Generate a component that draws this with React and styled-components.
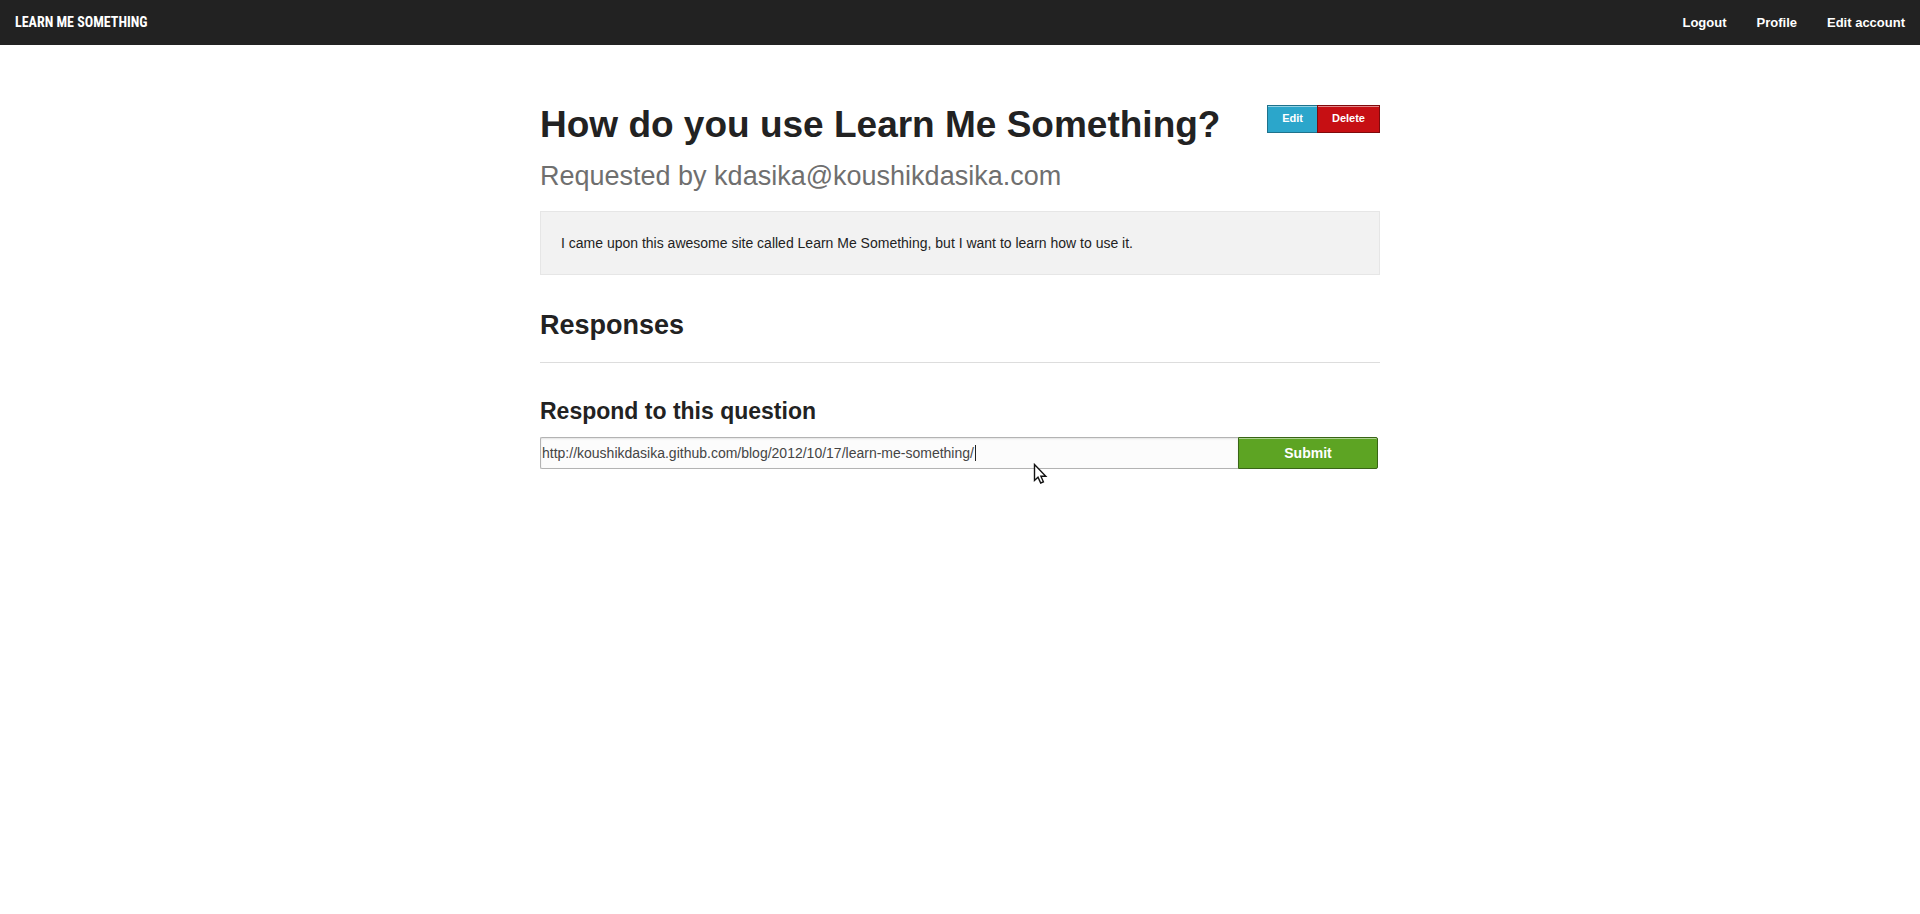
import React, { useEffect, useRef, useState } from "react";
import styled, { createGlobalStyle } from "styled-components";

const GlobalStyle = createGlobalStyle`
  *, *::before, *::after { box-sizing: border-box; }
  body {
    margin: 0;
    background: #fff;
    color: #222;
    font: 14px/22px "Liberation Sans", Arial, sans-serif;
  }
`;

const Site = styled.div`
  min-height: 100vh;
`;

const TopBar = styled.header`
  display: flex;
  justify-content: space-between;
  align-items: center;
  height: 45px;
  padding: 0 15px;
  background: #222;
`;

const Brand = styled.a`
  color: #fff;
  font: bold 14px/45px "Roboto Condensed", "Open Sans Condensed", "Noto Sans CJK JP", sans-serif;
  text-transform: uppercase;
  text-decoration: none;
  white-space: nowrap;
`;

const Nav = styled.nav`
  display: flex;
  gap: 30px;
`;

const NavLink = styled.a`
  color: #fff;
  font-size: 13px;
  font-weight: bold;
  line-height: 45px;
  text-decoration: none;
`;

const Page = styled.main`
  max-width: 840px;
  margin: 0 auto;
  padding-top: 59px;
`;

const TitleRow = styled.div`
  display: flex;
  justify-content: space-between;
  align-items: flex-start;
`;

const Title = styled.h1`
  margin: 0 0 15px;
  font-size: 37px;
  line-height: 42px;
`;

const Subtitle = styled.p`
  margin: 0 0 20px;
  color: #6f6f6f;
  font-size: 27px;
  line-height: 30px;
`;

const ButtonGroup = styled.div`
  display: flex;
  padding-top: 1px;
`;

const tones = {
  info: { face: "#2ba6cb", edge: "#1e728c" },
  alert: { face: "#c60f13", edge: "#7f0a0c" },
  success: { face: "#5da423", edge: "#396516" },
};

const Button = styled.button`
  border: 1px solid ${(p) => tones[p.$tone].edge};
  background: ${(p) => tones[p.$tone].face};
  box-shadow: inset 0 1px 0 rgba(255, 255, 255, 0.5);
  color: #fff;
  font-family: inherit;
  font-weight: bold;
  cursor: pointer;
`;

const SmallButton = styled(Button)`
  height: 28px;
  padding: 0 14px 2px;
  font-size: 11px;
  line-height: 12px;

  & + & {
    margin-left: -1px;
  }
`;

const Panel = styled.section`
  padding: 20px;
  border: 1px solid #e6e6e6;
  background: #f2f2f2;

  p { margin: 0; }
`;

const Responses = styled.section`
  padding: 35px 0 22px;
  border-bottom: 1px solid #ddd;
`;

const SectionTitle = styled.h2`
  margin: 0;
  font-size: 27px;
  line-height: 30px;
`;

const Form = styled.form`
  padding-top: 35px;
`;

const FormLabel = styled.label`
  display: block;
  margin-bottom: 13px;
  font-size: 23px;
  font-weight: bold;
  line-height: 26px;
`;

const FieldRow = styled.div`
  display: flex;
  padding-right: 2px;
`;

const Field = styled.div`
  position: relative;
  flex: 1;
`;

const LinkInput = styled.input`
  display: block;
  width: 100%;
  height: 32px;
  padding: 0 1px;
  border: 1px solid #b3b3b3;
  border-right: 0;
  border-radius: 2px 0 0 2px;
  outline: none;
  background: #fcfcfc;
  box-shadow: inset 0 1px 2px rgba(0, 0, 0, 0.1);
  color: #444;
  caret-color: transparent;
  font: 14px/22px "Liberation Sans", Arial, sans-serif;
`;

const Caret = styled.span`
  position: absolute;
  left: 435px;
  top: 8px;
  width: 1px;
  height: 16px;
  background: #222;
  pointer-events: none;
`;

const SubmitButton = styled(Button)`
  flex: 0 0 140px;
  height: 32px;
  padding: 0;
  border-radius: 0 2px 2px 0;
  font-size: 14px;
`;

const Pointer = styled.svg`
  position: absolute;
  left: 493px;
  top: 26px;
  pointer-events: none;
`;

export default function App() {
  const [link, setLink] = useState(
    "http://koushikdasika.github.com/blog/2012/10/17/learn-me-something/"
  );
  const input = useRef(null);

  useEffect(() => {
    const el = input.current;
    el.focus();
    el.setSelectionRange(el.value.length, el.value.length);
  }, []);

  return (
    <Site>
      <GlobalStyle />
      <TopBar>
        <Brand href="#">Learn Me Something</Brand>
        <Nav>
          <NavLink href="#">Logout</NavLink>
          <NavLink href="#">Profile</NavLink>
          <NavLink href="#">Edit account</NavLink>
        </Nav>
      </TopBar>
      <Page>
        <TitleRow>
          <Title>How do you use Learn Me Something?</Title>
          <ButtonGroup>
            <SmallButton type="button" $tone="info">Edit</SmallButton>
            <SmallButton type="button" $tone="alert">Delete</SmallButton>
          </ButtonGroup>
        </TitleRow>
        <Subtitle>Requested by kdasika@koushikdasika.com</Subtitle>
        <Panel>
          <p>
            I came upon this awesome site called Learn Me Something, but I want
            to learn how to use it.
          </p>
        </Panel>
        <Responses>
          <SectionTitle>Responses</SectionTitle>
        </Responses>
        <Form onSubmit={(e) => e.preventDefault()}>
          <FormLabel htmlFor="link">Respond to this question</FormLabel>
          <FieldRow>
            <Field>
              <LinkInput
                id="link"
                ref={input}
                type="text"
                value={link}
                onChange={(e) => setLink(e.target.value)}
              />
              <Caret aria-hidden="true" />
              <Pointer width="15" height="22" viewBox="0 0 15 22" aria-hidden="true">
                <path
                  d="M1.5 1.5V17.5L5 14.2L7.7 20L10.4 18.8L7.9 13.2H12.8Z"
                  fill="#fff"
                  stroke="#111"
                  strokeWidth="1.4"
                />
              </Pointer>
            </Field>
            <SubmitButton type="submit" $tone="success">Submit</SubmitButton>
          </FieldRow>
        </Form>
      </Page>
    </Site>
  );
}
